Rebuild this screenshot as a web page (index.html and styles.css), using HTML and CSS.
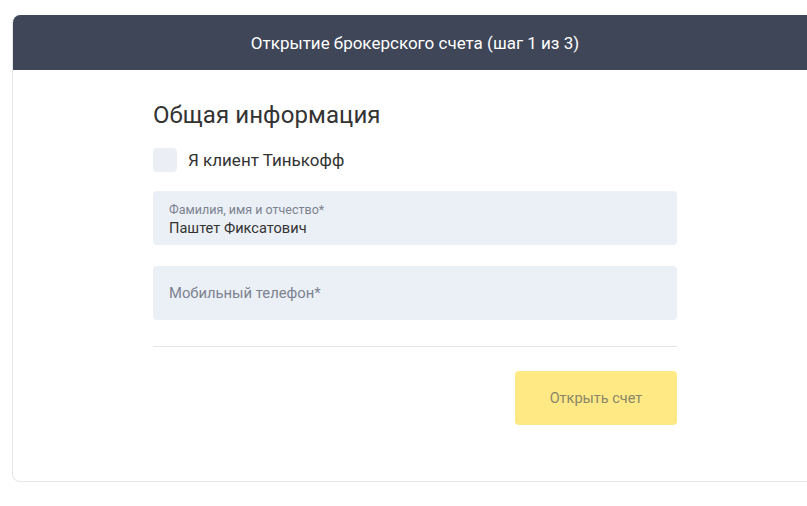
FILE: index.html
```html
<!DOCTYPE html>
<html lang="ru">
<head>
<meta charset="utf-8">
<title>Открытие брокерского счета</title>
<link rel="stylesheet" href="styles.css">
</head>
<body>
<div class="card">
  <div class="card-header">Открытие брокерского счета (шаг 1 из 3)</div>
  <div class="card-body">
    <form class="form">
      <h2 class="title">Общая информация</h2>
      <label class="check">
        <span class="check-box"></span>
        <span class="check-label">Я клиент Тинькофф</span>
      </label>
      <div class="field field-filled">
        <span class="field-label">Фамилия, имя и отчество*</span>
        <span class="field-value">Паштет Фиксатович</span>
      </div>
      <div class="field field-empty">
        <span class="field-placeholder">Мобильный телефон*</span>
      </div>
      <div class="divider"></div>
      <div class="actions">
        <button type="button" class="btn">Открыть счет</button>
      </div>
    </form>
  </div>
</div>
</body>
</html>
```

FILE: styles.css
```css
html, body {
  margin: 0;
  padding: 0;
  background: #ffffff;
}
body {
  font-family: Roboto, "Liberation Sans", sans-serif;
  color: #333333;
  padding: 15px 0 0 12px;
  overflow: hidden;
}
.card {
  width: 806px;
  border: 1px solid #e6e7ea;
  border-top: none;
  border-radius: 8px;
  box-sizing: border-box;
  overflow: hidden;
}
.card-header {
  height: 55px;
  margin: 0 -1px;
  background: #3e4657;
  color: #ffffff;
  font-size: 17px;
  display: flex;
  align-items: center;
  justify-content: center;
}
.card-body {
  display: flex;
  justify-content: center;
  padding: 31px 0 56px;
}
.form {
  width: 524px;
  display: flex;
  flex-direction: column;
}
.title {
  margin: 0;
  font-size: 24px;
  line-height: 28px;
  font-weight: 400;
  color: #333333;
  letter-spacing: 0.1px;
}
.check {
  display: flex;
  align-items: center;
  gap: 11px;
  margin-top: 19px;
}
.check-box {
  width: 24px;
  height: 24px;
  border-radius: 4px;
  background: #ebeff5;
}
.check-label {
  font-size: 17px;
  color: #333333;
}
.field {
  height: 54px;
  border-radius: 4px;
  background: #ebf0f6;
  box-sizing: border-box;
  padding: 0 16px;
  display: flex;
  flex-direction: column;
  justify-content: center;
}
.field-filled {
  margin-top: 19px;
  padding-top: 3px;
}
.field-empty {
  margin-top: 21px;
}
.field-label {
  font-size: 12.5px;
  line-height: 16px;
  color: #7c8290;
}
.field-value {
  font-size: 14.6px;
  line-height: 20px;
  color: #333333;
}
.field-placeholder {
  font-size: 14.8px;
  color: #7c8290;
}
.divider {
  margin-top: 26px;
  height: 1px;
  background: #e3e4e7;
}
.actions {
  display: flex;
  justify-content: flex-end;
  margin-top: 24px;
}
.btn {
  width: 162px;
  height: 54px;
  border: none;
  border-radius: 4px;
  background: #ffe985;
  color: #8a8668;
  font-family: inherit;
  font-size: 14.5px;
}
```
